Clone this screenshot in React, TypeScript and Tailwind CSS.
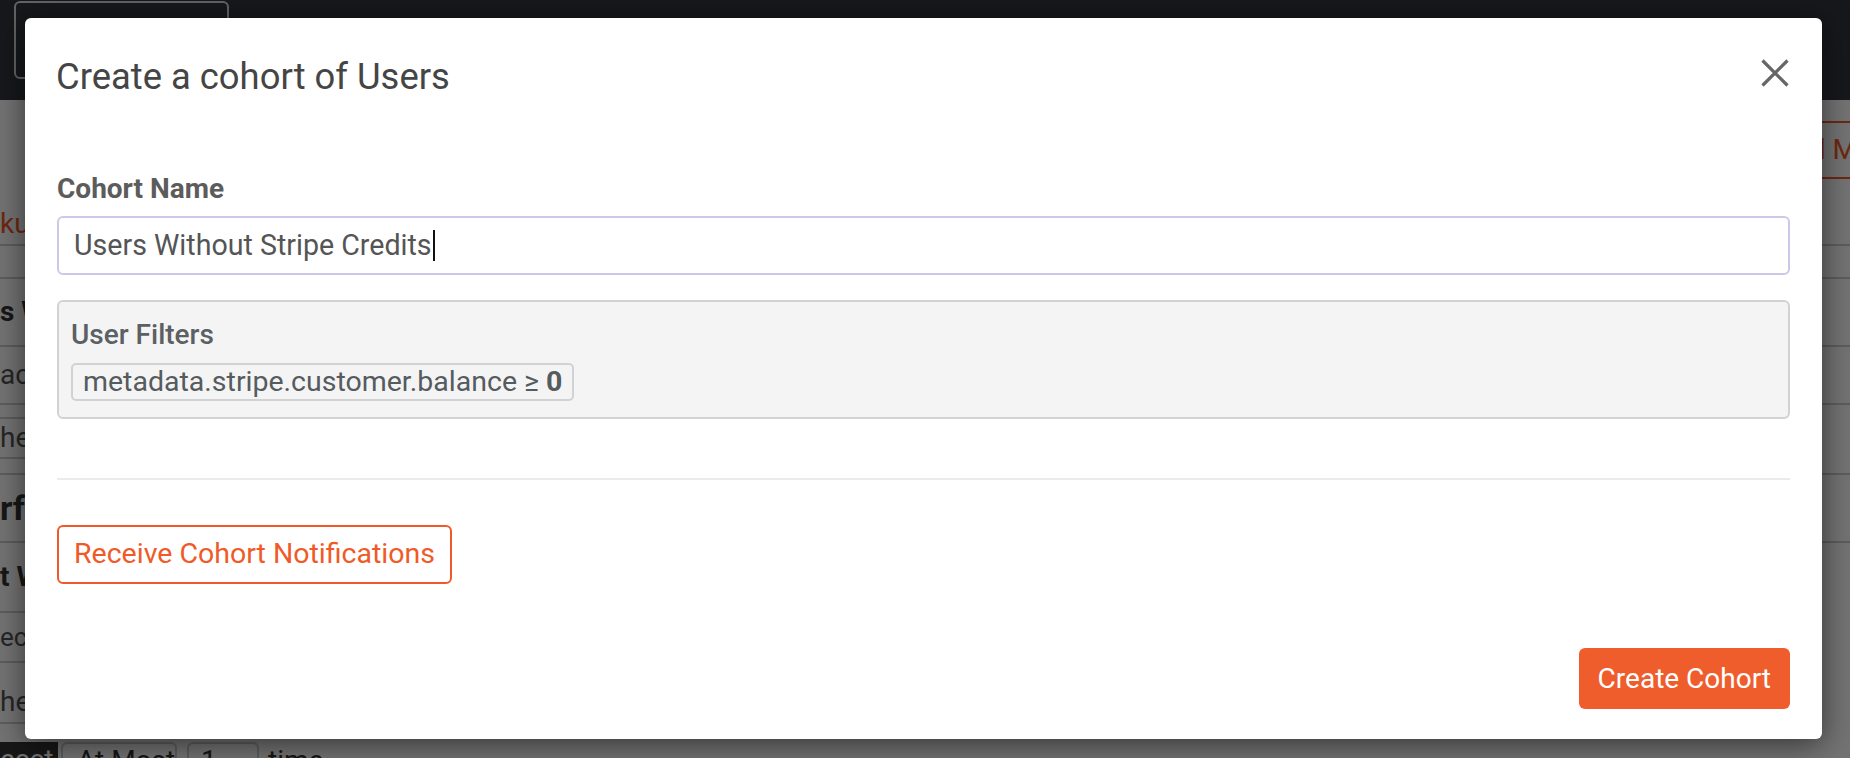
import React from "react";

function CloseIcon() {
  return (
    <svg width="28" height="28" viewBox="0 0 28 28" fill="none">
      <path d="M1.5 1.5L26.5 26.5M26.5 1.5L1.5 26.5" stroke="#666666" strokeWidth="3.2" />
    </svg>
  );
}

function Background() {
  return (
    <div className="flex flex-col w-[1850px] h-[758px] bg-white text-[#333]">
      <div className="h-[100px] bg-[#31353c] shrink-0 pt-[1px] pl-[14px]">
        <div className="w-[215px] h-[78px] border-2 border-[#dddddd] rounded-[6px]" />
      </div>
      <div className="h-[146px] shrink-0 border-b-2 border-[#cfcfcf] flex justify-between">
        <div className="flex items-end pb-[4px]">
          <span className="text-[28px] leading-[32px] text-[#f05a28] whitespace-nowrap">kup Rules</span>
        </div>
        <div className="pt-[21px] -mr-[80px]">
          <div className="h-[58px] border-2 border-[#f05a28] rounded-[6px] pl-[40px] pr-[16px] flex items-center text-[28px] text-[#f05a28] whitespace-nowrap">
            Add Metric
          </div>
        </div>
      </div>
      <div className="h-[33px] shrink-0 border-b-2 border-[#cfcfcf]" />
      <div className="h-[68px] shrink-0 border-b-2 border-[#cfcfcf] flex items-center">
        <span className="text-[28px] font-bold whitespace-nowrap">s Without</span>
      </div>
      <div className="h-[58px] shrink-0 border-b-2 border-[#cfcfcf] flex items-center">
        <span className="text-[28px] text-[#555] whitespace-nowrap">ach</span>
      </div>
      <div className="w-[600px] mt-[12px] h-[42px] shrink-0 border-y-2 border-[#cfcfcf] flex items-center">
        <span className="text-[28px] text-[#555] whitespace-nowrap">he</span>
      </div>
      <div className="h-[16px] shrink-0 border-b-2 border-[#cfcfcf]" />
      <div className="h-[68px] shrink-0 border-b-2 border-[#cfcfcf] flex items-center">
        <span className="text-[34px] font-bold whitespace-nowrap">rform</span>
      </div>
      <div className="w-[600px] h-[70px] shrink-0 border-b-2 border-[#cfcfcf] flex items-center">
        <span className="text-[28px] font-bold whitespace-nowrap">t Which</span>
      </div>
      <div className="w-[600px] h-[50px] shrink-0 border-b-2 border-[#cfcfcf] flex items-center">
        <span className="text-[26px] text-[#555] whitespace-nowrap">ect</span>
      </div>
      <div className="w-[600px] h-[61px] shrink-0 border-b-2 border-[#cfcfcf] pt-[23px]">
        <span className="text-[28px] leading-[32px] text-[#555] whitespace-nowrap">he</span>
      </div>
      <div className="mt-[18px] flex items-start gap-[3px] shrink-0">
        <div className="h-[56px] w-[58px] bg-[#333] text-white text-[28px] leading-[32px] pt-[2px] overflow-hidden whitespace-nowrap">ecct</div>
        <div className="h-[56px] w-[116px] border-2 border-[#cfcfcf] rounded-[6px] text-[28px] leading-[32px] pt-[1px] px-[14px] whitespace-nowrap">At Most</div>
        <div className="ml-[7px] h-[56px] w-[72px] border-2 border-[#cfcfcf] rounded-[6px] text-[28px] leading-[32px] pt-[1px] px-[12px]">1</div>
        <div className="ml-[6px] text-[28px] leading-[32px] pt-[3px] text-[#333]">time</div>
      </div>
    </div>
  );
}

export default function App() {
  return (
    <div
      className="relative w-[1850px] h-[758px] overflow-hidden"
      style={{ fontFamily: "Roboto, 'Noto Sans', 'Liberation Sans', sans-serif" }}
    >
      <Background />
      <div className="absolute inset-0 bg-black/55 pl-[25px] pt-[18px]">
        <div className="w-[1797px] bg-white rounded-[6px] shadow-[0_5px_30px_rgba(0,0,0,0.55)] pb-[30px]">
          <div className="px-[31px] pt-[39px] flex justify-between items-start">
            <h1 className="text-[36.4px] leading-[40px] text-[#454545] font-normal">Create a cohort of Users</h1>
            <button className="mt-[2px] mr-[2px]">
              <CloseIcon />
            </button>
          </div>
          <div className="px-[32px]">
            <div className="mt-[76px] text-[28px] leading-[32px] font-bold text-[#5c5c5c]">Cohort Name</div>
            <div className="mt-[11px] h-[59px] border-2 border-[#cfc7e7] rounded-[6px] px-[15px] flex items-center text-[28.6px] text-[#555]">
              <span>Users Without Stripe Credits</span>
              <span className="inline-block w-[2px] h-[31px] bg-[#111] ml-[1px]" />
            </div>
            <div className="mt-[25px] border-2 border-[#d1d3d3] bg-[#f4f4f4] rounded-[6px] px-[12px] pt-[17px] pb-[16px]">
              <div className="text-[28px] leading-[32px] font-medium text-[#5b6064]">User Filters</div>
              <div className="mt-[12px] inline-flex h-[38px] items-center border-2 border-[#cfd3d3] rounded-[5px] px-[10px] text-[28.5px] text-[#555b5f]">
                metadata.stripe.customer.balance ≥&nbsp;<span className="font-bold">0</span>
              </div>
            </div>
            <div className="mt-[59px] h-[2px] bg-[#ebebeb]" />
            <button className="mt-[45px] h-[59px] border-2 border-[#ef5a28] rounded-[6px] px-[15px] text-[28.5px] text-[#ef5a28] bg-white">
              Receive Cohort Notifications
            </button>
            <div className="mt-[64px] flex justify-end">
              <button className="h-[61px] px-[19px] bg-[#ef5d2c] rounded-[6px] text-[28px] text-white">
                Create Cohort
              </button>
            </div>
          </div>
        </div>
      </div>
    </div>
  );
}
